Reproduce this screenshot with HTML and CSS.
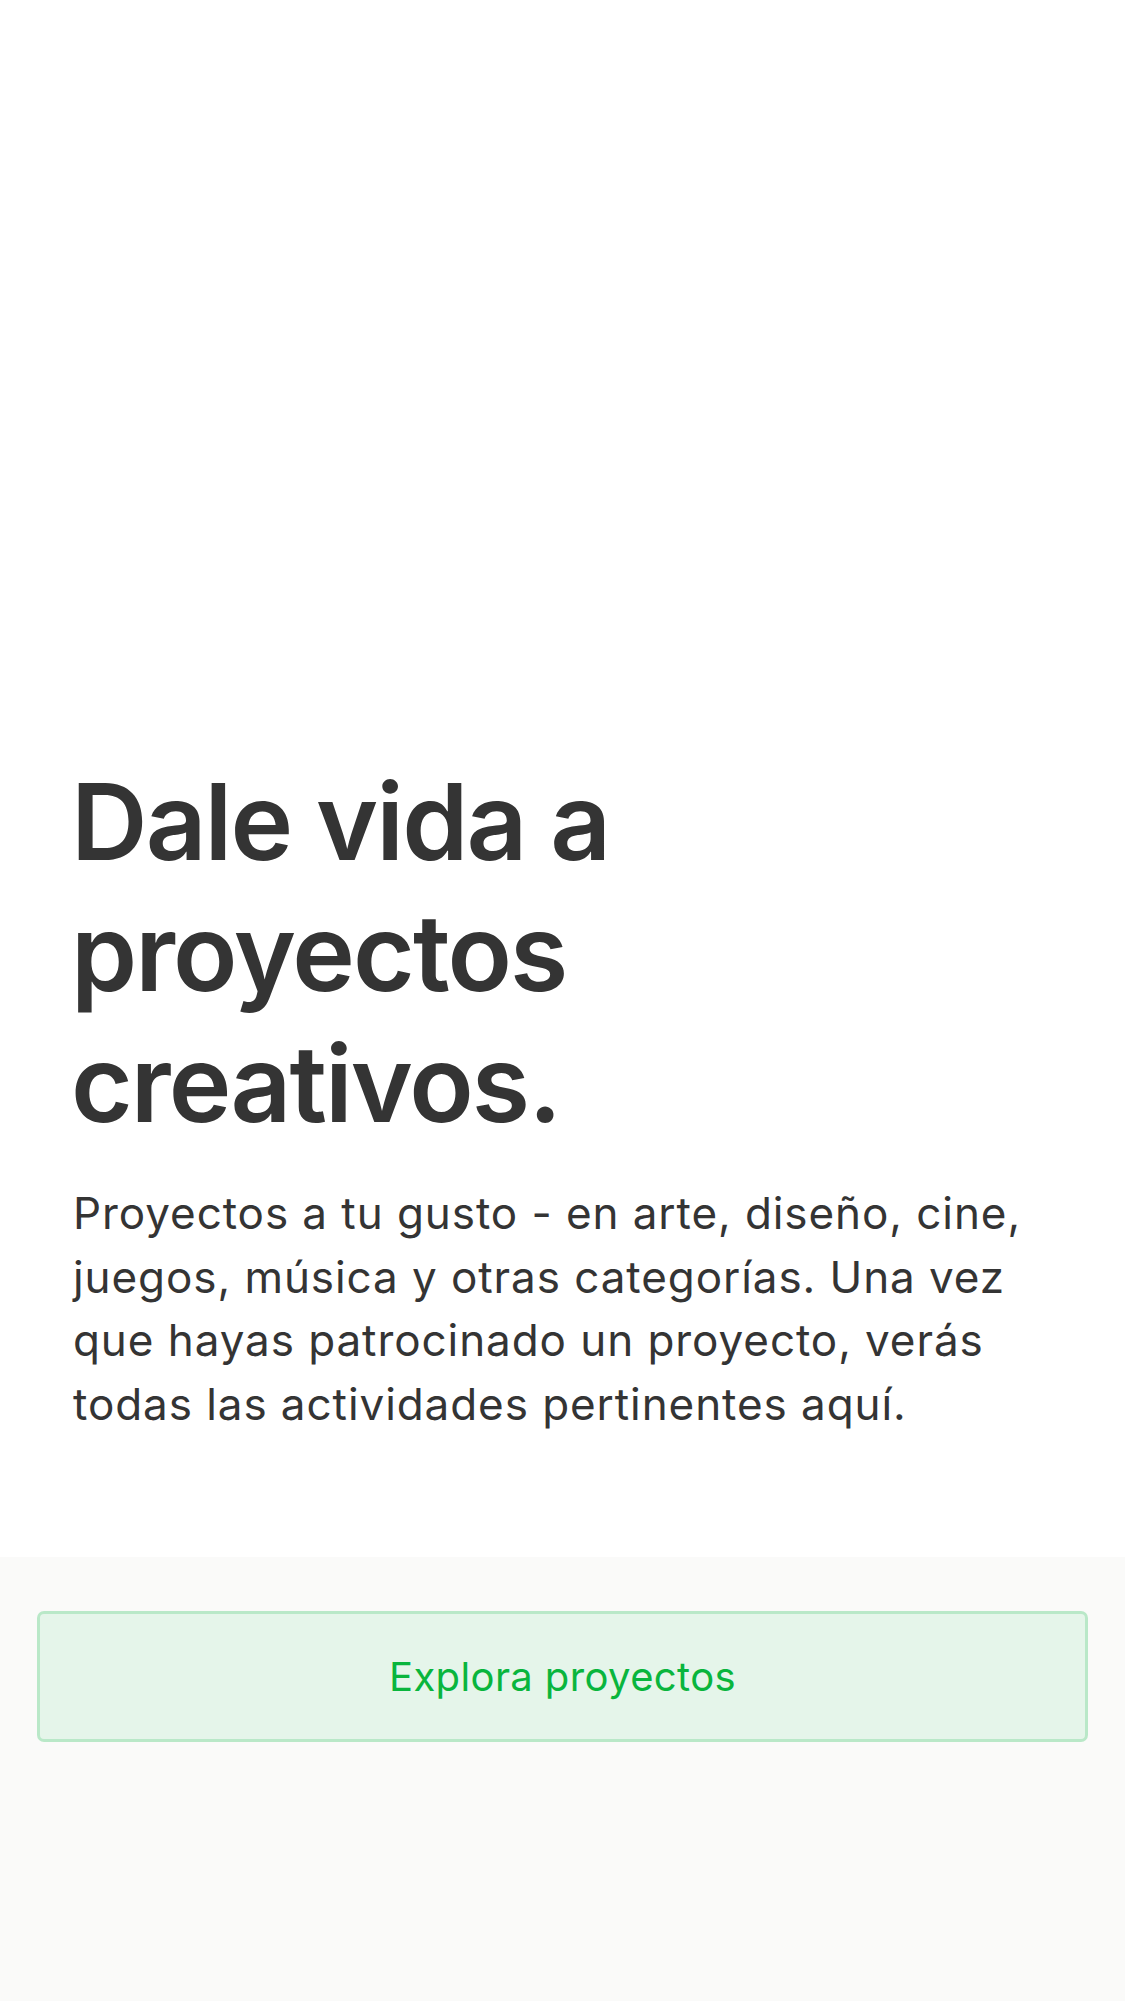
FILE: index.html
```html
<!DOCTYPE html>
<html lang="es">
<head>
<meta charset="utf-8">
<title>Dale vida a proyectos creativos</title>
<link rel="stylesheet" href="styles.css">
</head>
<body>
<main class="page">
  <section class="hero">
    <h1 class="hero-title">Dale vida a proyectos creativos.</h1>
    <p class="hero-text">Proyectos a tu gusto - en arte, diseño, cine, juegos, música y otras categorías. Una vez que hayas patrocinado un proyecto, verás todas las actividades pertinentes aquí.</p>
  </section>
  <section class="footer">
    <a class="explore-btn" href="#">Explora proyectos</a>
  </section>
</main>
</body>
</html>
```

FILE: styles.css
```css
html, body {
  margin: 0;
  padding: 0;
  background: #fafaf9;
}

body {
  font-family: Inter, "Noto Sans", "Liberation Sans", sans-serif;
  color: #343434;
}

.page {
  display: flex;
  flex-direction: column;
  min-height: 2001px;
}

.hero {
  box-sizing: border-box;
  height: 1557px;
  background: #ffffff;
  display: flex;
  flex-direction: column;
  justify-content: flex-end;
  padding: 0 60px 121px 73px;
}

.hero-title {
  margin: 0 0 0 -2px;
  font-size: 106px;
  line-height: 131px;
  font-weight: 600;
  letter-spacing: -1.9px;
  color: #343434;
  max-width: 700px;
}

.hero-text {
  margin: 33px 0 0;
  font-size: 44px;
  line-height: 63.4px;
  font-weight: 400;
  letter-spacing: 0.93px;
  color: #343434;
}

.footer {
  flex: 1;
  background: #fafaf9;
  padding: 54px 37px;
}

.explore-btn {
  box-sizing: border-box;
  display: flex;
  align-items: center;
  justify-content: center;
  height: 131px;
  background: #e5f5ea;
  border: 3px solid #b9e8c8;
  border-radius: 7px;
  color: #09b53d;
  font-size: 40px;
  letter-spacing: 0.38px;
  text-decoration: none;
}
```
